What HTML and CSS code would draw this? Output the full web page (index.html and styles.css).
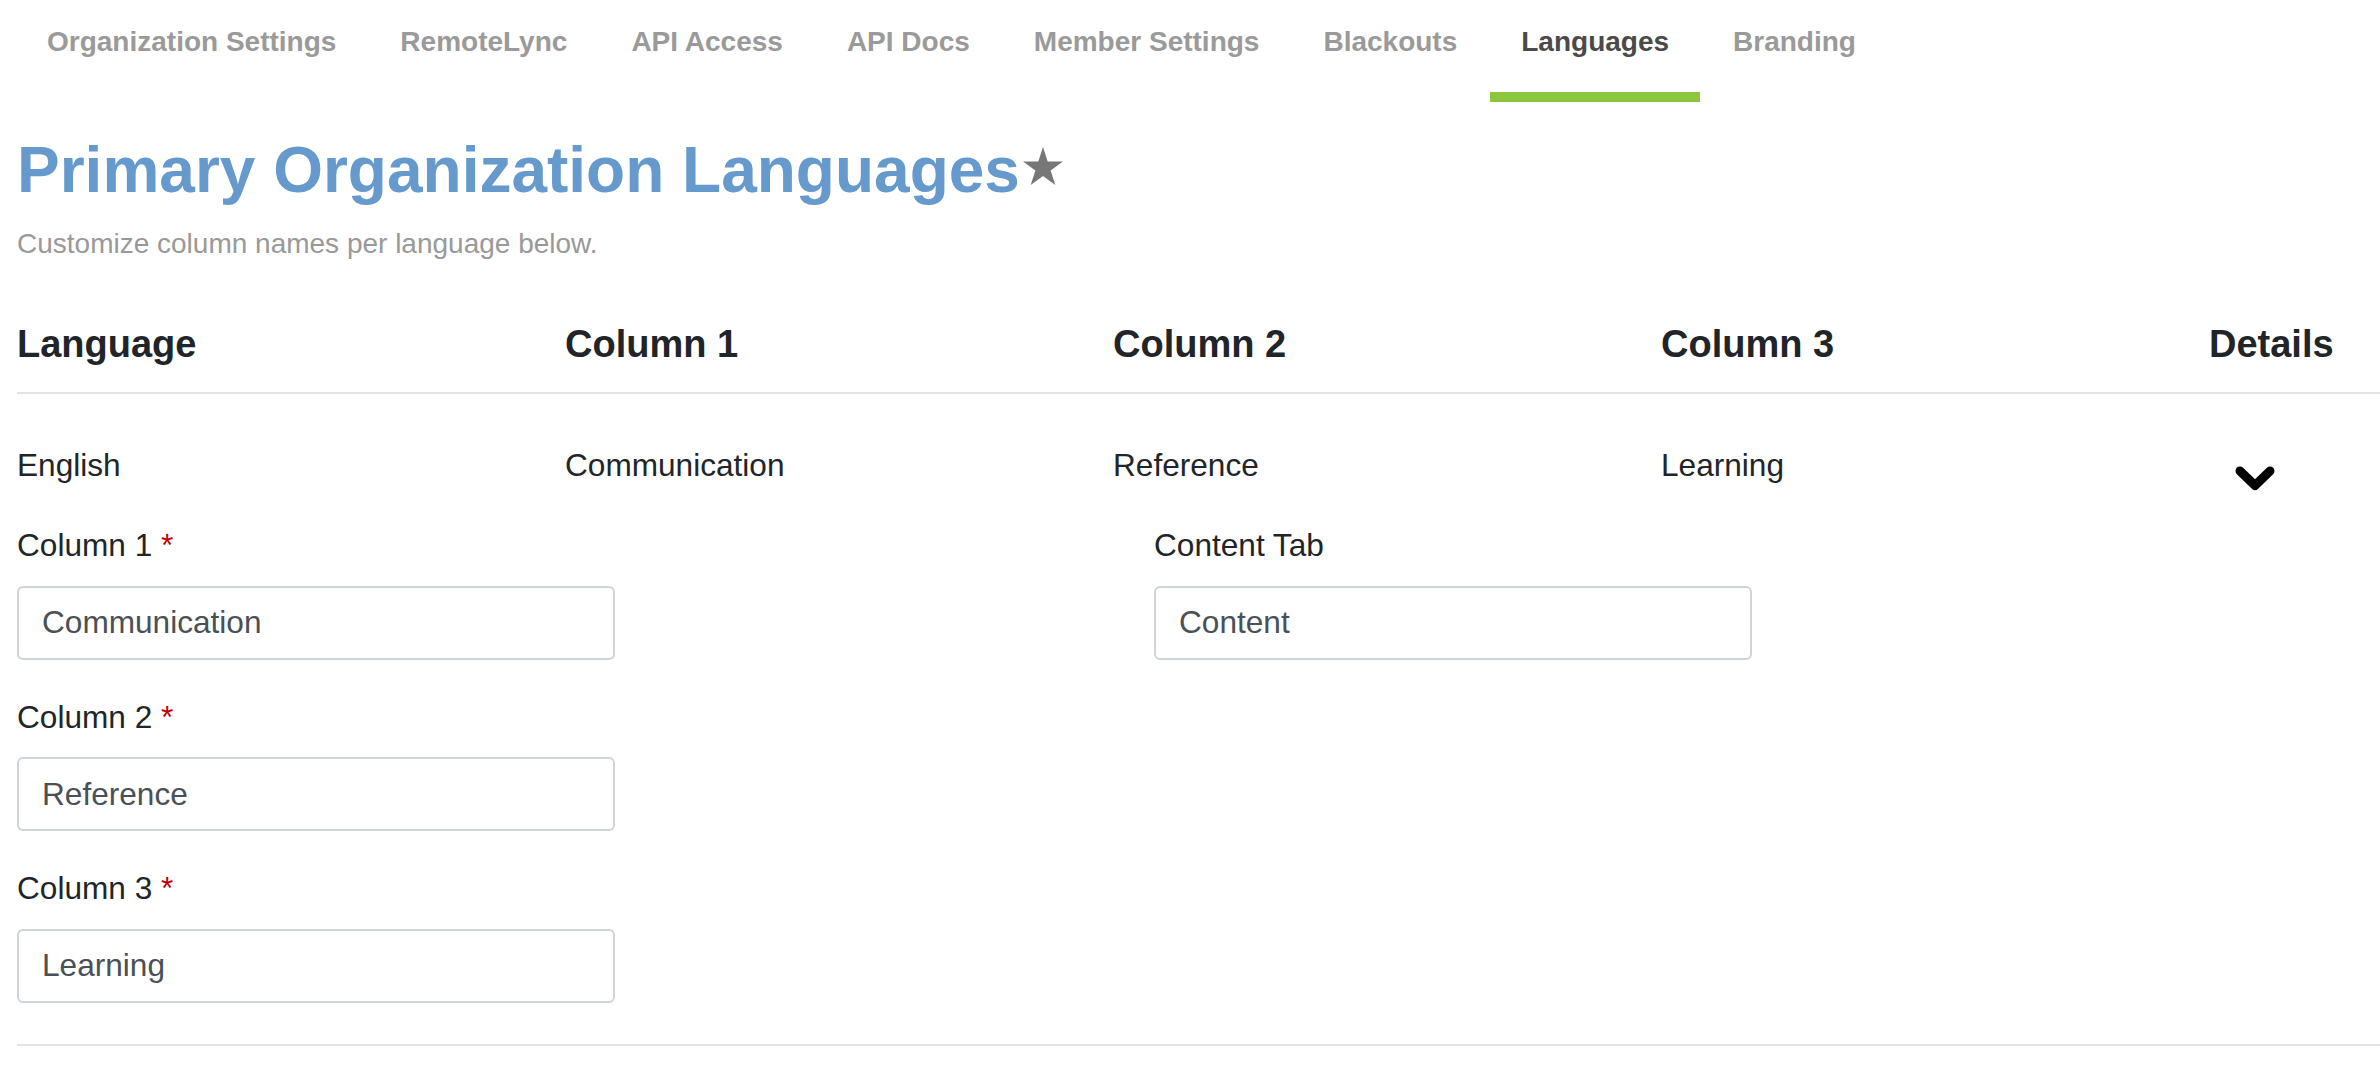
FILE: index.html
```html
<!DOCTYPE html>
<html lang="en">
<head>
  <meta charset="UTF-8">
  <meta name="viewport" content="width=device-width, initial-scale=1.0">
  <title>Languages</title>
  <link rel="stylesheet" href="styles.css">
</head>
<body>

  <!-- Settings tabs -->
  <nav class="tabs">
    <a href="#">Organization Settings</a>
    <a href="#">RemoteLync</a>
    <a href="#">API Access</a>
    <a href="#">API Docs</a>
    <a href="#">Member Settings</a>
    <a href="#">Blackouts</a>
    <a href="#" class="active">Languages</a>
    <a href="#">Branding</a>
  </nav>

  <main class="page">
    <h1 class="page-title">Primary Organization Languages<svg class="star" viewBox="0 0 40 38" width="40" height="38"><polygon points="20,0 24.7,14.5 40,14.5 27.6,23.5 32.3,38 20,29 7.7,38 12.4,23.5 0,14.5 15.3,14.5"/></svg></h1>
    <p class="page-subtitle">Customize column names per language below.</p>

    <!-- Languages table -->
    <div class="lang-table">
      <div class="lang-head">
        <div>Language</div>
        <div>Column 1</div>
        <div>Column 2</div>
        <div>Column 3</div>
        <div>Details</div>
      </div>

      <div class="lang-row">
        <div class="lang-summary">
          <div>English</div>
          <div>Communication</div>
          <div>Reference</div>
          <div>Learning</div>
          <div>
            <button class="toggle" type="button">
              <svg viewBox="0 0 40 26" width="40" height="26"><polyline points="5,5 20,19.5 35,5"/></svg>
            </button>
          </div>
        </div>

        <div class="lang-details">
          <div class="details-col">
            <div class="field">
              <label>Column 1 <span class="req">*</span></label>
              <input type="text" value="Communication">
            </div>
            <div class="field">
              <label>Column 2 <span class="req">*</span></label>
              <input type="text" value="Reference">
            </div>
            <div class="field">
              <label>Column 3 <span class="req">*</span></label>
              <input type="text" value="Learning">
            </div>
          </div>
          <div class="details-col">
            <div class="field">
              <label>Content Tab</label>
              <input type="text" value="Content">
            </div>
          </div>
        </div>
      </div>
    </div>
  </main>

</body>
</html>
```

FILE: styles.css
```css
body {
  margin: 0;
  padding-left: 17px;
  font-family: "Liberation Sans", Arial, Helvetica, sans-serif;
  color: #212529;
  background-color: #ffffff;
  overflow: hidden;
}

/* Tabs */
.tabs {
  display: flex;
  gap: 2px;
  margin-left: -1px;
}

.tabs a {
  padding: 25px 31px 33px;
  font-size: 28px;
  line-height: 34px;
  font-weight: bold;
  color: #9a9a9a;
  text-decoration: none;
  white-space: nowrap;
  border-bottom: 10px solid transparent;
}

.tabs a.active {
  color: #4a4a4a;
  border-bottom-color: #8cc63f;
}

/* Heading */
.page-title {
  margin: 30px 0 0;
  font-size: 64px;
  line-height: 77px;
  font-weight: bold;
  color: #6699cc;
  white-space: nowrap;
}

.star {
  fill: #777777;
  margin-left: 3px;
  vertical-align: 7px;
}

.page-subtitle {
  margin: 19px 0 0;
  font-size: 28px;
  line-height: 32px;
  color: #999999;
}

/* Table */
.lang-head,
.lang-summary {
  display: grid;
  grid-template-columns: repeat(4, 548px) 1fr;
}

.lang-head {
  margin-top: 62px;
  padding-bottom: 25px;
  border-bottom: 2px solid #e2e4e6;
  font-size: 38px;
  line-height: 45px;
  font-weight: bold;
}

.lang-row {
  padding-bottom: 7px;
  border-bottom: 2px solid #e2e4e6;
}

.lang-summary {
  align-items: start;
  padding-top: 48px;
  font-size: 31.6px;
  line-height: 46.5px;
}

.toggle {
  display: block;
  margin: 24px 0 0 26px;
  padding: 0;
  border: none;
  background: none;
  cursor: pointer;
}

.toggle svg {
  display: block;
  fill: none;
  stroke: #000000;
  stroke-width: 9;
  stroke-linecap: round;
  stroke-linejoin: round;
}

/* Details form */
.lang-details {
  display: grid;
  grid-template-columns: 1137px 1fr;
  align-items: start;
  margin-top: 30px;
}

.field {
  margin-bottom: 34px;
}

.field label {
  display: block;
  margin-bottom: 17px;
  font-size: 31.6px;
  line-height: 46.5px;
}

.req {
  color: #c00000;
}

.field input {
  display: block;
  box-sizing: border-box;
  width: 598px;
  height: 74px;
  padding: 0 23px;
  border: 2px solid #ced4da;
  border-radius: 6px;
  font-family: inherit;
  font-size: 31.6px;
  color: #495057;
  background-color: #ffffff;
}
```
